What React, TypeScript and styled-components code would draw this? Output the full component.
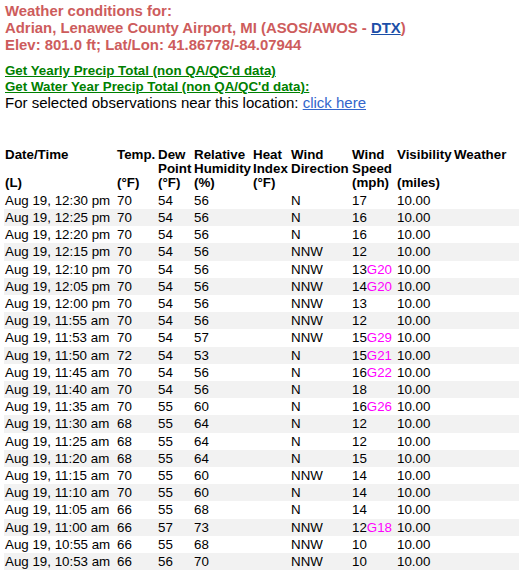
import React from "react";
import styled, { createGlobalStyle } from "styled-components";

const GlobalStyle = createGlobalStyle`
  html, body {
    margin: 0;
    padding: 0;
    background: #ffffff;
  }
  body {
    font-family: "Liberation Sans", Arial, sans-serif;
    color: #000000;
    overflow: hidden;
  }
`;

const Page = styled.div`
  padding: 3.2px 0 0 5px;
`;

const Title = styled.div`
  font-size: 14.9px;
  line-height: 16.7px;
  font-weight: bold;
  color: #cd5c5c;
`;

const StationLink = styled.a`
  color: #1b4fa8;
  text-decoration: underline;
`;

const LinkBlock = styled.div`
  margin-top: 10px;
  font-size: 13.33px;
  line-height: 15.7px;
`;

const GreenLink = styled.a`
  display: block;
  color: #008000;
  font-weight: bold;
  text-decoration: underline;
`;

const Note = styled.div`
  color: #000000;
  font-size: 15px;
  line-height: 16.6px;
`;

const BlueLink = styled.a`
  color: #3366cc;
  text-decoration: underline;
`;

const Table = styled.table`
  margin: 35.5px 0 0 -1px;
  width: calc(100% + 1px);
  border-collapse: collapse;
  border-spacing: 0;
  table-layout: fixed;
  font-size: 13.33px;
`;

const HeadCell = styled.th`
  padding: 1px;
  text-align: left;
  vertical-align: top;
  font-weight: bold;
  line-height: 14.3px;
  white-space: nowrap;
`;

const HeadLine = styled.div`
  height: 14.3px;
`;

const Row = styled.tr<{ $striped: boolean }>`
  background: ${(p) => (p.$striped ? "#f2f2f2" : "#ffffff")};
  height: 17.2px;
`;

const Cell = styled.td`
  padding: 1px;
  line-height: 15.2px;
  white-space: nowrap;
  vertical-align: top;
`;

const Gust = styled.span`
  color: #ff00ff;
`;

const colWidths = [112, 41, 36, 59, 38, 61, 45, 57];

const headers: string[][] = [
  ["Date/Time", "", "(L)"],
  ["Temp.", "", "(°F)"],
  ["Dew", "Point", "(°F)"],
  ["Relative", "Humidity", "(%)"],
  ["Heat", "Index", "(°F)"],
  ["Wind", "Direction", ""],
  ["Wind", "Speed", "(mph)"],
  ["Visibility", "", "(miles)"],
  ["Weather", "", ""],
];

type Obs = {
  time: string;
  temp: string;
  dew: string;
  rh: string;
  dir: string;
  speed: string;
  gust?: string;
};

const rows: Obs[] = [
  { time: "12:30 pm", temp: "70", dew: "54", rh: "56", dir: "N", speed: "17" },
  { time: "12:25 pm", temp: "70", dew: "54", rh: "56", dir: "N", speed: "16" },
  { time: "12:20 pm", temp: "70", dew: "54", rh: "56", dir: "N", speed: "16" },
  { time: "12:15 pm", temp: "70", dew: "54", rh: "56", dir: "NNW", speed: "12" },
  { time: "12:10 pm", temp: "70", dew: "54", rh: "56", dir: "NNW", speed: "13", gust: "G20" },
  { time: "12:05 pm", temp: "70", dew: "54", rh: "56", dir: "NNW", speed: "14", gust: "G20" },
  { time: "12:00 pm", temp: "70", dew: "54", rh: "56", dir: "NNW", speed: "13" },
  { time: "11:55 am", temp: "70", dew: "54", rh: "56", dir: "NNW", speed: "12" },
  { time: "11:53 am", temp: "70", dew: "54", rh: "57", dir: "NNW", speed: "15", gust: "G29" },
  { time: "11:50 am", temp: "72", dew: "54", rh: "53", dir: "N", speed: "15", gust: "G21" },
  { time: "11:45 am", temp: "70", dew: "54", rh: "56", dir: "N", speed: "16", gust: "G22" },
  { time: "11:40 am", temp: "70", dew: "54", rh: "56", dir: "N", speed: "18" },
  { time: "11:35 am", temp: "70", dew: "55", rh: "60", dir: "N", speed: "16", gust: "G26" },
  { time: "11:30 am", temp: "68", dew: "55", rh: "64", dir: "N", speed: "12" },
  { time: "11:25 am", temp: "68", dew: "55", rh: "64", dir: "N", speed: "12" },
  { time: "11:20 am", temp: "68", dew: "55", rh: "64", dir: "N", speed: "15" },
  { time: "11:15 am", temp: "70", dew: "55", rh: "60", dir: "NNW", speed: "14" },
  { time: "11:10 am", temp: "70", dew: "55", rh: "60", dir: "N", speed: "14" },
  { time: "11:05 am", temp: "66", dew: "55", rh: "68", dir: "N", speed: "14" },
  { time: "11:00 am", temp: "66", dew: "57", rh: "73", dir: "NNW", speed: "12", gust: "G18" },
  { time: "10:55 am", temp: "66", dew: "55", rh: "68", dir: "NNW", speed: "10" },
  { time: "10:53 am", temp: "66", dew: "56", rh: "70", dir: "NNW", speed: "10" },
];

export default function App() {
  return (
    <>
      <GlobalStyle />
      <Page>
        <Title>
          <div>Weather conditions for:</div>
          <div>
            Adrian, Lenawee County Airport, MI (ASOS/AWOS -{" "}
            <StationLink href="#">DTX</StationLink>)
          </div>
          <div>Elev: 801.0 ft; Lat/Lon: 41.86778/-84.07944</div>
        </Title>
        <LinkBlock>
          <GreenLink href="#">Get Yearly Precip Total (non QA/QC'd data)</GreenLink>
          <GreenLink href="#">Get Water Year Precip Total (non QA/QC'd data):</GreenLink>
          <Note>
            For selected observations near this location:{" "}
            <BlueLink href="#">click here</BlueLink>
          </Note>
        </LinkBlock>
        <Table>
          <colgroup>
            {colWidths.map((w, i) => (
              <col key={i} style={{ width: w }} />
            ))}
            <col />
          </colgroup>
          <thead>
            <tr>
              {headers.map((lines, i) => (
                <HeadCell key={i}>
                  {lines.map((l, j) => (
                    <HeadLine key={j}>{l}</HeadLine>
                  ))}
                </HeadCell>
              ))}
            </tr>
          </thead>
          <tbody>
            {rows.map((r, i) => (
              <Row key={i} $striped={i % 2 === 1}>
                <Cell>Aug 19, {r.time}</Cell>
                <Cell>{r.temp}</Cell>
                <Cell>{r.dew}</Cell>
                <Cell>{r.rh}</Cell>
                <Cell></Cell>
                <Cell>{r.dir}</Cell>
                <Cell>
                  {r.speed}
                  {r.gust && <Gust>{r.gust}</Gust>}
                </Cell>
                <Cell>10.00</Cell>
                <Cell></Cell>
              </Row>
            ))}
          </tbody>
        </Table>
      </Page>
    </>
  );
}
